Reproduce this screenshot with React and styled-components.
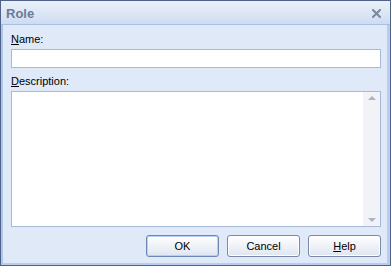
import React from 'react';
import styled, { createGlobalStyle } from 'styled-components';

const GlobalStyle = createGlobalStyle`
  html, body {
    margin: 0;
    padding: 0;
    background: #ffffff;
  }
  * {
    box-sizing: border-box;
  }
`;

const Window = styled.div`
  width: 391px;
  height: 266px;
  border: 1px solid #4d6286;
  display: flex;
  flex-direction: column;
  font-family: "Liberation Sans", Arial, sans-serif;
  font-size: 11px;
  color: #000;
  background: #dfe9f8;
`;

const TitleBar = styled.div`
  height: 24px;
  flex: none;
  display: flex;
  align-items: center;
  justify-content: space-between;
  padding: 0 9px 0 5px;
  background: linear-gradient(to bottom, #e9f0fa 0%, #dde7f5 50%, #cedcf1 100%);
  border-bottom: 1px solid #a7c1e3;
`;

const Title = styled.span`
  font-size: 13px;
  font-weight: bold;
  color: #6b7b95;
  padding-top: 1px;
`;

const CloseButton = styled.span`
  display: flex;
  width: 9px;
  height: 9px;
  margin-top: 2px;
`;

const Body = styled.div`
  flex: 1;
  display: flex;
  flex-direction: column;
  border-left: 2px solid #aec6ec;
  border-right: 3px solid #b8cdee;
  border-bottom: 2px solid #b8cdee;
  padding: 8px 6px 6px 8px;
`;

const Label = styled.div`
  height: 13px;
  line-height: 13px;
  margin-bottom: 3px;
  margin-top: ${(p) => p.$top || 0}px;
`;

const Key = styled.span`
  text-decoration: underline;
`;

const Input = styled.div`
  height: 19px;
  background: #fff;
  border: 1px solid #a6b9d6;
`;

const TextArea = styled.div`
  flex: 1;
  display: flex;
  background: #fff;
  border: 1px solid #a6b9d6;
`;

const TextRegion = styled.div`
  flex: 1;
`;

const ScrollBar = styled.div`
  width: 17px;
  display: flex;
  flex-direction: column;
  justify-content: space-between;
  align-items: center;
  background: #f1f3f6;
  padding: 4px 0 4px;
`;

const Arrow = styled.span`
  width: 0;
  height: 0;
  border-left: 4px solid transparent;
  border-right: 4px solid transparent;
  ${(p) =>
    p.$down
      ? 'border-top: 4px solid #a8b4c8;'
      : 'border-bottom: 4px solid #a8b4c8;'}
`;

const ButtonRow = styled.div`
  display: flex;
  justify-content: flex-end;
  gap: 8px;
  margin-top: 8px;
`;

const Button = styled.div`
  width: 73px;
  height: 22px;
  display: flex;
  align-items: center;
  justify-content: center;
  border: 1px solid ${(p) => (p.$default ? '#6d87b3' : '#7a8aa4')};
  border-radius: 3px;
  background: linear-gradient(to bottom, #ffffff 0%, #eef2f8 50%, #dfe6f1 100%);
  box-shadow: ${(p) => (p.$default ? 'inset 0 0 0 1px #b9d0f2' : 'inset 0 0 0 1px #ffffff')};
  font-size: 11px;
`;

export default function App() {
  return (
    <>
      <GlobalStyle />
      <Window>
        <TitleBar>
          <Title>Role</Title>
          <CloseButton>
            <svg width="9" height="9" viewBox="0 0 9 9">
              <path d="M1 1 L8 8 M8 1 L1 8" stroke="#7c889e" strokeWidth="2" strokeLinecap="square" />
            </svg>
          </CloseButton>
        </TitleBar>
        <Body>
          <Label><Key>N</Key>ame:</Label>
          <Input />
          <Label $top={7}><Key>D</Key>escription:</Label>
          <TextArea>
            <TextRegion />
            <ScrollBar>
              <Arrow />
              <Arrow $down />
            </ScrollBar>
          </TextArea>
          <ButtonRow>
            <Button $default>OK</Button>
            <Button>Cancel</Button>
            <Button><span><Key>H</Key>elp</span></Button>
          </ButtonRow>
        </Body>
      </Window>
    </>
  );
}
